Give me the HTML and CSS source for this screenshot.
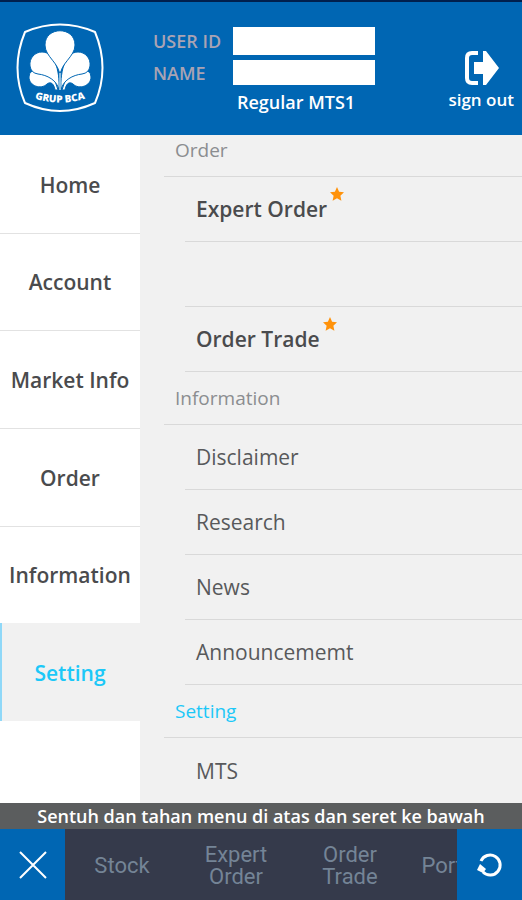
FILE: index.html
```html
<!DOCTYPE html>
<html lang="id">
<head>
    <meta charset="UTF-8">
    <meta name="viewport" content="width=device-width, initial-scale=1.0">
    <title>MTS Menu</title>
    <link rel="stylesheet" href="styles.css">
</head>
<body>
    <header class="header">
        <svg class="logo" viewBox="0 0 90 90" role="img" aria-label="Grup BCA">
            <path d="M10 9 Q45 -6 80 9 Q95 45 80 80 Q45 96 10 80 Q-5 45 10 9Z" fill="none" stroke="#fff" stroke-width="2" stroke-linejoin="round"/>
            <g fill="#fff" stroke="#0066b3" stroke-width="1">
                <path d="M40 67 C39 61 36 58 32 61 C26 67 14 63 14 54 Q14 50 17 48 Q40 48 43 67Z"/>
                <path d="M50 67 C51 61 54 58 58 61 C64 67 76 63 76 54 Q76 50 73 48 Q50 48 47 67Z"/>
                <path d="M44 67 C42 57 32 52 23 51 Q16 50 15 43 C14 35 20 29 27 29 C39 29 45 46 44 67Z"/>
                <path d="M46 67 C48 57 58 52 67 51 Q74 50 75 43 C76 35 70 29 63 29 C51 29 45 46 46 67Z"/>
                <path d="M45 54 C45 40 30 34 30 22 C30 3 60 3 60 22 C60 34 45 40 45 54Z"/>
            </g>
            <path d="M45 50 V67" stroke="#8fbfe0" stroke-width="2"/>
            <path id="logo-arc" d="M18 75 Q45 84 72 75" fill="none"/>
            <text class="logo-text"><textPath href="#logo-arc" startOffset="50%" text-anchor="middle">GRUP BCA</textPath></text>
        </svg>
        <form class="user">
            <label for="user-id">USER ID</label>
            <input type="text" id="user-id" name="user_id">
            <label for="name">NAME</label>
            <input type="text" id="name" name="name">
            <p class="user-type">Regular MTS1</p>
        </form>
        <button type="button" class="sign-out">
            <svg width="36" height="36" viewBox="0 0 36 36" aria-hidden="true">
                <path d="M15 3 H9 Q4 3 4 8 V28 Q4 33 9 33 H15" fill="none" stroke="#fff" stroke-width="4"/>
                <path d="M11 12 H20 V1 H23 L36 18 L23 35 H20 V24 H11Z" fill="#fff"/>
            </svg>
            sign out
        </button>
    </header>

    <main class="main">
        <nav class="sidebar">
            <a href="#">Home</a>
            <a href="#">Account</a>
            <a href="#">Market Info</a>
            <a href="#">Order</a>
            <a href="#">Information</a>
            <a href="#" class="active">Setting</a>
        </nav>
        <div class="panel">
            <section>
                <h2>Order</h2>
                <ul>
                    <li class="favorite"><a href="#">Expert Order<svg class="star" viewBox="0 0 24 24"><path d="M12 0l3.6 8 8.4 1-6.200 5.800 1.700 8.700L12 19.200 4.500 23.500l1.700-8.700L0 9l8.400-1z"/></svg></a></li>
                    <li></li>
                    <li class="favorite"><a href="#">Order Trade<svg class="star" viewBox="0 0 24 24"><path d="M12 0l3.6 8 8.4 1-6.200 5.800 1.700 8.700L12 19.200 4.500 23.500l1.700-8.700L0 9l8.400-1z"/></svg></a></li>
                </ul>
            </section>
            <section>
                <h2>Information</h2>
                <ul>
                    <li><a href="#">Disclaimer</a></li>
                    <li><a href="#">Research</a></li>
                    <li><a href="#">News</a></li>
                    <li><a href="#">Announcememt</a></li>
                </ul>
            </section>
            <section>
                <h2 class="current">Setting</h2>
                <ul>
                    <li><a href="#">MTS</a></li>
                </ul>
            </section>
        </div>
    </main>

    <footer class="footer">
        <p class="hint">Sentuh dan tahan menu di atas dan seret ke bawah</p>
        <div class="toolbar">
            <button type="button" class="tool" aria-label="Close">
                <svg width="28" height="28" viewBox="0 0 28 28"><path d="M1 1 L27 27 M27 1 L1 27" stroke="#fff" stroke-width="2"/></svg>
            </button>
            <nav class="shortcuts">
                <a href="#">Stock</a>
                <a href="#">Expert Order</a>
                <a href="#">Order Trade</a>
                <a href="#">Portfolio</a>
            </nav>
            <button type="button" class="tool" aria-label="Refresh">
                <svg width="26" height="26" viewBox="0 0 26 26"><path d="M4 9 A10 10 0 1 1 6 20" fill="none" stroke="#fff" stroke-width="3"/><path d="M0 18 L3 12 L9 17 L6 21Z" fill="#fff"/></svg>
            </button>
        </div>
    </footer>
</body>
</html>
```
FILE: styles.css
```css
* {
    box-sizing: border-box;
}
body {
    margin: 0;
    height: 100vh;
    display: flex;
    flex-direction: column;
    font-family: "Open Sans", "Noto Sans", sans-serif;
    background: #fff;
    color: #4a4b4d;
}
a {
    color: inherit;
    text-decoration: none;
}
button {
    border: none;
    padding: 0;
    font-family: inherit;
    color: #fff;
    background: #0066b3;
    cursor: pointer;
}
p, h2, ul {
    margin: 0;
    padding: 0;
}

/* header */
.header {
    display: flex;
    align-items: flex-start;
    height: 135px;
    padding: 21px 8px 0 15px;
    background: #0066b3;
    border-top: 2px solid #001f4d;
    color: #fff;
}
.logo {
    width: 90px;
    height: 90px;
}
.logo-text {
    font-size: 10px;
    font-weight: 800;
    fill: #fff;
}
.user {
    display: grid;
    grid-template-columns: 80px 142px;
    grid-template-rows: 28px 25px 24px;
    row-gap: 5px;
    align-items: center;
    margin-left: 48px;
    padding-top: 4px;
    font-size: 18px;
    line-height: 24px;
}
.user label {
    color: #a9a3b3;
    font-weight: 600;
}
.user input {
    width: 100%;
    height: 100%;
    border: none;
    border-radius: 0;
    padding: 0 6px;
    font: inherit;
    background: #fff;
}
.user-type {
    grid-column: 2;
    padding-left: 4px;
    font-weight: 600;
    white-space: nowrap;
}
.sign-out {
    display: flex;
    flex-direction: column;
    align-items: center;
    margin-left: auto;
    padding-top: 27px;
    font-size: 17px;
    font-weight: 600;
    line-height: 28px;
}

/* menu */
.main {
    flex: 1;
    display: flex;
    min-height: 0;
    overflow: hidden;
}
.sidebar {
    flex: 0 0 140px;
    display: grid;
    grid-auto-rows: 1fr;
    height: 586px;
    font-size: 21px;
    font-weight: 600;
    white-space: nowrap;
}
.sidebar a {
    display: flex;
    align-items: center;
    justify-content: center;
    padding-top: 2px;
    box-shadow: 0 1px #e2e2e2;
}
.sidebar .active {
    background: #f1f1f1;
    color: #1cc8f8;
    box-shadow: inset 2px 0 #8fd8f8;
}
.panel {
    flex: 1;
    padding-left: 24px;
    background: #f1f1f1;
}
.panel h2 {
    height: 53px;
    padding: 13px 11px;
    font-size: 19px;
    font-weight: 400;
    line-height: 26px;
    color: #8b8d90;
    border-bottom: 1px solid #d9d9d9;
}
.panel section:first-child h2 {
    height: 42px;
    padding-top: 2px;
}
.panel .current {
    color: #1cc8f8;
}
.panel ul {
    padding-left: 21px;
    list-style: none;
}
.panel li {
    display: flex;
    align-items: center;
    height: 65px;
    padding-left: 11px;
    font-size: 21px;
    color: #58595b;
    border-bottom: 1px solid #d9d9d9;
}
.panel section:last-child li:last-child {
    border-bottom: none;
}
.panel .favorite {
    font-weight: 600;
    color: #4a4b4d;
}
.favorite a {
    position: relative;
}
.star {
    position: absolute;
    top: -8px;
    left: 100%;
    width: 14px;
    height: 14px;
    margin-left: 3px;
    fill: #ff920a;
}

/* footer */
.hint {
    height: 26px;
    background: #5b5d5e;
    color: #fff;
    font-size: 18px;
    font-weight: 600;
    line-height: 26px;
    text-align: center;
    white-space: nowrap;
}
.toolbar {
    display: flex;
    height: 71px;
    background: #353a4b;
}
.tool {
    flex: 0 0 65px;
    display: flex;
    align-items: center;
    justify-content: center;
}
.shortcuts {
    flex: 1;
    display: flex;
    overflow: hidden;
    font-family: Roboto, sans-serif;
    font-size: 22px;
    line-height: 22px;
    color: #748496;
}
.shortcuts a {
    flex: 0 0 114px;
    display: flex;
    align-items: center;
    justify-content: center;
    padding: 2px 12px 0;
    text-align: center;
}
```
